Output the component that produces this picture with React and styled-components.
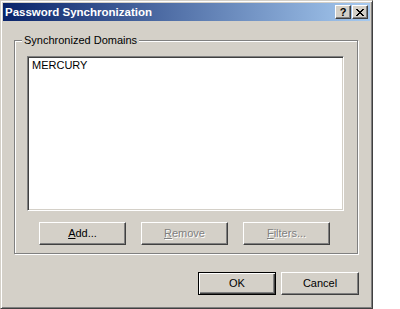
import React from "react";
import styled, { createGlobalStyle, css } from "styled-components";

const Global = createGlobalStyle`
  html, body { margin: 0; padding: 0; background: #ffffff; }
  * { box-sizing: border-box; }
`;

const Window = styled.div`
  width: 373px;
  height: 309px;
  background: #d4d0c8;
  border: 1px solid;
  border-color: #d4d0c8 #404040 #404040 #d4d0c8;
  box-shadow: inset 1px 1px 0 #ffffff, inset -1px -1px 0 #808080;
  padding: 2px;
  display: flex;
  flex-direction: column;
  font-family: "Liberation Sans", Arial, sans-serif;
  font-size: 11px;
  color: #000;
`;

const TitleBar = styled.div`
  height: 18px;
  display: flex;
  align-items: center;
  padding: 0 2px 0 2px;
  background: linear-gradient(to right, #0a246a, #a6caf0);
`;

const Title = styled.div`
  flex: 1;
  color: #ffffff;
  font-weight: bold;
  font-size: 11.5px;
  line-height: 18px;
  white-space: nowrap;
`;

const bevel = css`
  background: #d4d0c8;
  border: 1px solid;
  border-color: #ffffff #404040 #404040 #ffffff;
  box-shadow: inset -1px -1px 0 #808080;
`;

const CaptionButton = styled.div`
  ${bevel}
  width: 16px;
  height: 14px;
  display: flex;
  align-items: center;
  justify-content: center;
  margin-left: ${(p) => p.$gap || 0}px;
  font-weight: bold;
  font-size: 11px;
  line-height: 12px;
  color: #000;
`;

const Body = styled.div`
  flex: 1;
  display: flex;
  flex-direction: column;
  padding: 19px 11px 0 11px;
`;

const Group = styled.div`
  position: relative;
  width: 344px;
  height: 214px;
  border: 1px solid #808080;
  box-shadow: inset 1px 1px 0 #ffffff, 1px 1px 0 #ffffff;
  padding: 15px 13px 0 12px;
  display: flex;
  flex-direction: column;
`;

const GroupLabel = styled.div`
  position: absolute;
  top: -7px;
  left: 7px;
  padding: 0 2px;
  background: #d4d0c8;
  line-height: 13px;
  white-space: nowrap;
`;

const ListBox = styled.div`
  width: 317px;
  height: 155px;
  background: #ffffff;
  border: 1px solid;
  border-color: #808080 #ffffff #ffffff #808080;
  box-shadow: inset 1px 1px 0 #404040, inset -1px -1px 0 #d4d0c8;
  padding: 2px 2px;
`;

const ListItem = styled.div`
  line-height: 13px;
  padding: 0 2px;
  white-space: nowrap;
`;

const ButtonRow = styled.div`
  display: flex;
  gap: ${(p) => p.$gap}px;
  justify-content: ${(p) => p.$justify || "flex-start"};
  margin-top: ${(p) => p.$top}px;
  padding-left: ${(p) => p.$left || 0}px;
`;

const Button = styled.div`
  ${bevel}
  width: ${(p) => p.$w}px;
  height: 23px;
  display: flex;
  align-items: center;
  justify-content: center;
  line-height: 13px;
  color: ${(p) => (p.$disabled ? "#808080" : "#000")};
  text-shadow: ${(p) => (p.$disabled ? "1px 1px 0 #ffffff" : "none")};
  ${(p) =>
    p.$default &&
    css`
      border: 1px solid #000;
      box-shadow: inset 1px 1px 0 #ffffff, inset -1px -1px 0 #404040,
        inset -2px -2px 0 #808080;
    `}
`;

const Key = styled.span`
  text-decoration: underline;
  text-underline-offset: 1px;
`;

function CloseGlyph() {
  const px = [
    [0, 0], [1, 0], [6, 0], [7, 0],
    [1, 1], [2, 1], [5, 1], [6, 1],
    [2, 2], [3, 2], [4, 2], [5, 2],
    [3, 3], [4, 3],
    [2, 4], [3, 4], [4, 4], [5, 4],
    [1, 5], [2, 5], [5, 5], [6, 5],
    [0, 6], [1, 6], [6, 6], [7, 6],
  ];
  return (
    <svg width="8" height="7" viewBox="0 0 8 7" shapeRendering="crispEdges">
      {px.map(([x, y]) => (
        <rect key={`${x}-${y}`} x={x} y={y} width="1" height="1" fill="#000" />
      ))}
    </svg>
  );
}

export default function App() {
  return (
    <>
      <Global />
      <Window>
        <TitleBar>
          <Title>Password Synchronization</Title>
          <CaptionButton>?</CaptionButton>
          <CaptionButton $gap={1}>
            <CloseGlyph />
          </CaptionButton>
        </TitleBar>
        <Body>
          <Group>
            <GroupLabel>Synchronized Domains</GroupLabel>
            <ListBox>
              <ListItem>MERCURY</ListItem>
            </ListBox>
            <ButtonRow $gap={15} $top={11} $left={12}>
              <Button $w={87}>
                <Key>A</Key>dd...
              </Button>
              <Button $w={87} $disabled>
                <Key>R</Key>emove
              </Button>
              <Button $w={87} $disabled>
                <Key>F</Key>ilters...
              </Button>
            </ButtonRow>
          </Group>
          <ButtonRow $gap={5} $top={18} $justify="flex-end">
            <Button $w={78} $default>OK</Button>
            <Button $w={78}>Cancel</Button>
          </ButtonRow>
        </Body>
      </Window>
    </>
  );
}
